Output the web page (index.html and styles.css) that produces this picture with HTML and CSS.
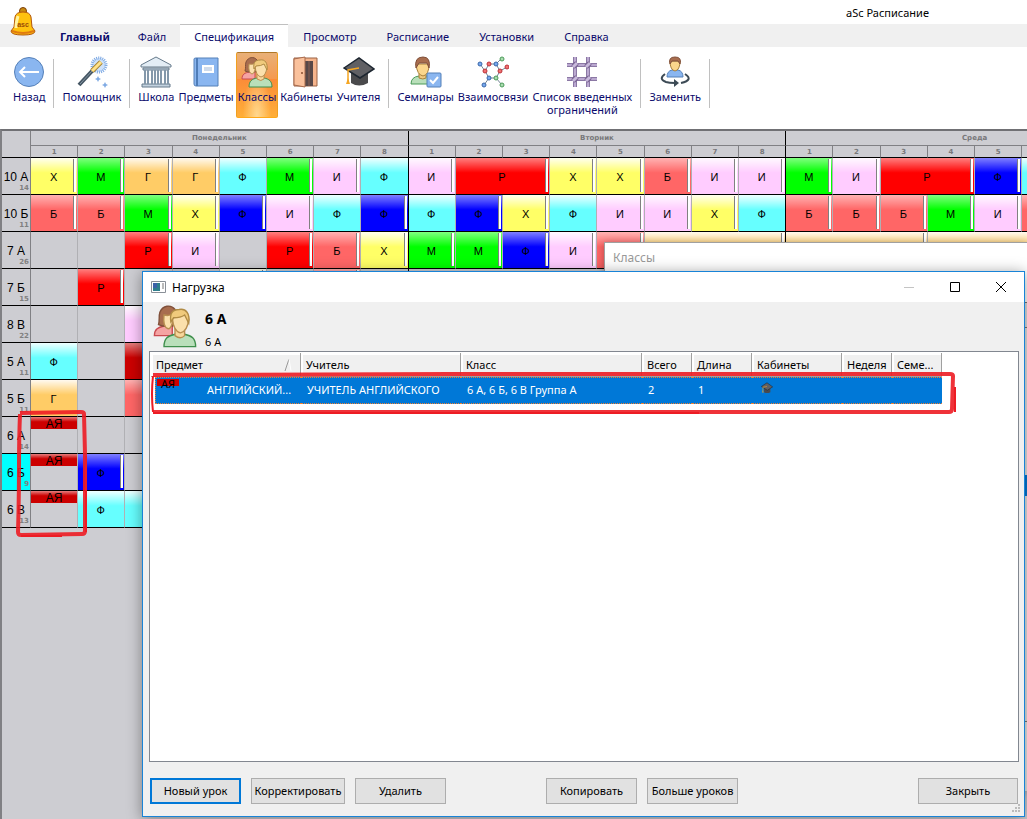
FILE: index.html
```html
<!DOCTYPE html>
<html lang="ru">
<head>
  <meta charset="UTF-8" />
  <meta name="viewport" content="width=device-width, initial-scale=1.0"/>
  <title>aSc Расписание</title>
  <link rel="stylesheet" href="styles.css">
</head>
<body>
  <!-- Shared icons -->
  <svg class="defs" aria-hidden="true">
    <symbol id="people" viewBox="0 0 32 32">
      <path d="M1 23c0-5 3-6 7-7h6v7z" fill="#f5a3a3" stroke="#c94a50"/>
      <path d="M4 15c1-3 0-6 1-9 2-5 8-6 11-2 2 3 1 6 2 10l-4 2H7z" fill="#a86d4e" stroke="#80503a"/>
      <path d="M8 8q4 1 6-1v7q-1 4-3 4-4-1-3-10z" fill="#fbe0ac" stroke="#b88e50"/>
      <path d="M8 31c0-6 3-8 8-9h7c5 1 8 3 8 9z" fill="#b9dfba" stroke="#3f8f4c"/>
      <path d="M16 18v5q4 3 7 0v-5z" fill="#f7d79b" stroke="#b88e50"/>
      <path d="M14 10q6-1 9-3 1 3 3 4-1 9-6 10-5-1-6-11z" fill="#fbe0ac" stroke="#b88e50"/>
      <path d="M13 13c-1-6 1-9 6-9 5-1 8 3 7 10l-3-6q-3 2-8 2z" fill="#f0ca7c" stroke="#b08b45"/>
    </symbol>
    <symbol id="hat" viewBox="0 0 32 32">
      <path d="M8 14v13q8 5 17 0V14z" fill="#4a4a4c"/>
      <path d="M1 12 16 2l15 11-14 9z" fill="#606064" stroke="#1d2630" stroke-width="1.5"/>
      <path d="M16 12 5 14v11" fill="none" stroke="#f5a623" stroke-width="1.5"/>
      <path d="M5 22l-2 6h4z" fill="#f5a623"/>
    </symbol>
  </svg>

  <header class="top">
    <div class="title">
      <svg class="bell" viewBox="0 0 26 30">
        <circle cx="13" cy="4" r="3.500" fill="#c88a10" stroke="#7a3c08"/>
        <path d="M5 10q1-5 8-5t8 5l1 10 3 4q0 4-12 4T1 24l3-4z" fill="#ffc20e" stroke="#b4560a"/>
        <path d="M8 9q-2 6-2 12" fill="none" stroke="#fff3a0" stroke-width="3"/>
        <path d="M2 24q11 4 22 0" fill="none" stroke="#e07a10" stroke-width="2"/>
        <text x="13" y="20" text-anchor="middle" class="bell-text">asc</text>
      </svg>
      <span>aSc Расписание</span>
    </div>
    <nav class="tabs">
      <a href="#" class="tab main-tab">Главный</a>
      <a href="#" class="tab">Файл</a>
      <a href="#" class="tab active">Спецификация</a>
      <a href="#" class="tab">Просмотр</a>
      <a href="#" class="tab">Расписание</a>
      <a href="#" class="tab">Установки</a>
      <a href="#" class="tab">Справка</a>
    </nav>
    <div class="ribbon">
      <button class="tool">
        <svg viewBox="0 0 32 32"><circle cx="16" cy="16" r="14.500" fill="#8ab6f0" stroke="#5580b8"/><path d="M26 16H7M12 11l-5 5 5 5" fill="none" stroke="#fff" stroke-width="2"/></svg>
        Назад
      </button>
      <span class="sep"></span>
      <button class="tool">
        <svg viewBox="0 0 32 32">
          <circle cx="23" cy="9" r="7" fill="#cfe2fa" stroke="#80abe4" stroke-width="3" stroke-dasharray="1 1"/>
          <path d="M3 29 17 14" stroke="#445563" stroke-width="4"/>
          <path d="M4 28 17 14" stroke="#8798a5" stroke-width="1"/>
          <path d="M16 15 25 6" stroke="#a98430" stroke-width="5"/>
          <path d="M16 15 25 6" stroke="#ffe28a" stroke-width="3"/>
          <path d="M22 20l1 2 2 1-2 1-1 2-1-2-2-1 2-1zM29 26l1 2 2 1-2 1-1 2-1-2-2-1 2-1z" fill="#80abe4"/>
        </svg>
        Помощник
      </button>
      <span class="sep"></span>
      <button class="tool">
        <svg viewBox="0 0 32 32">
          <path d="M1 9 16 1l15 8v2H1z" fill="#e3edf5" stroke="#667a8b"/>
          <path d="M3 12h26v2H3zM2 28h28v3H2z" fill="#c3d2df" stroke="#667a8b"/>
          <path d="M5 14v14M8 14v14M12 14v14M15 14v14M18 14v14M21 14v14M25 14v14M28 14v14" stroke="#8498aa" stroke-width="2"/>
        </svg>
        Школа
      </button>
      <button class="tool">
        <svg viewBox="0 0 32 32"><path d="M4 3q0-1 2-1h22v28H6q-2 0-2-2z" fill="#8ab6f0" stroke="#5580b8"/><path d="M7 2v28" stroke="#4f7db8" stroke-width="2"/><path d="M12 9h12v8H12z" fill="#fff"/><path d="M14 12h8M14 14h8" stroke="#a0b8d8"/></svg>
        Предметы
      </button>
      <button class="tool pressed">
        <svg><use href="#people"/></svg>
        Классы
      </button>
      <button class="tool">
        <svg viewBox="0 0 32 32"><path d="M4 2h23v28H4z" fill="#f5b48c" stroke="#9b6244"/><path d="M10 5h13v25H10z" fill="#584848"/><path d="M19 5v25" stroke="#8a5f50"/><path d="M4 3l11-2v30L4 29z" fill="#fac19c" stroke="#a86a4c"/><circle cx="12" cy="17" r="1" fill="#8a4e30"/></svg>
        Кабинеты
      </button>
      <button class="tool">
        <svg><use href="#hat"/></svg>
        Учителя
      </button>
      <span class="sep"></span>
      <button class="tool">
        <svg viewBox="0 0 32 32">
          <path d="M1 28q0-7 8-8h8q6 1 7 8z" fill="#b9dfba" stroke="#4a9a58"/>
          <path d="M9 17v5q4 2 7 0v-5z" fill="#f0ca80" stroke="#a8803c"/>
          <path d="M6 8h13q0 11-6 12-6-1-7-12z" fill="#fbd68c" stroke="#a8803c"/>
          <path d="M6 12q-2-11 7-11 8 0 6 11l-2-5H9z" fill="#a86d4e" stroke="#80503a"/>
          <rect x="17" y="17" width="14" height="14" rx="1" fill="#8ab6f0" stroke="#5580b8"/>
          <path d="M20 24l3 3 5-6" fill="none" stroke="#fff" stroke-width="2"/>
        </svg>
        Семинары
      </button>
      <button class="tool">
        <svg viewBox="0 0 32 32">
          <path d="M3 8 8 15l4 7-5 7M12 8l-4 7M12 8h7l5-5M19 8l4 7 7-4M23 15l-4 7 6 7M12 22h7" fill="none" stroke="#748494"/>
          <g fill="#ee7070" stroke="#bd3038"><circle cx="12" cy="8" r="2"/><circle cx="8" cy="15" r="2"/><circle cx="23" cy="15" r="2"/><circle cx="30" cy="11" r="2"/></g>
          <g fill="#76a8ee" stroke="#3967a8"><circle cx="3" cy="8" r="2"/><circle cx="19" cy="8" r="2"/><circle cx="12" cy="22" r="2"/><circle cx="7" cy="29" r="2"/></g>
          <g fill="#aadcb0" stroke="#4a9a58"><circle cx="25" cy="3" r="2"/><circle cx="19" cy="22" r="2"/><circle cx="25" cy="29" r="2"/></g>
        </svg>
        Взаимосвязи
      </button>
      <button class="tool wide">
        <svg viewBox="0 0 32 32">
          <path d="M9 1v30M22 1v30M1 9h30M1 23h30" stroke="#8b78a4" stroke-width="4"/>
          <path d="M9 1v30M22 1v30M1 9h30M1 23h30" stroke="#baa8d0" stroke-width="2"/>
          <path d="M7 11l4-4M20 11l4-4M7 25l4-4M20 25l4-4" stroke="#776090" stroke-width="5"/>
          <path d="M7 11l4-4M20 11l4-4M7 25l4-4M20 25l4-4" stroke="#c8b9dc" stroke-width="3"/>
        </svg>
        Список введенных ограничений
      </button>
      <span class="sep"></span>
      <button class="tool">
        <svg viewBox="0 0 32 32">
          <path d="M8 21q0-6 5-7h6q5 1 5 7z" fill="#8ab6f0" stroke="#5580b8"/>
          <path d="M11 5h10q0 9-5 10-5-1-5-10z" fill="#fbd68c" stroke="#a8803c"/>
          <path d="M11 8q-2-7 5-7t5 7l-2-3h-6z" fill="#a86d4e" stroke="#80503a"/>
          <path d="M6 18q-7 5 1 8 3 1 9 1M26 18q9 6-4 9" fill="none" stroke="#3c4a55" stroke-width="2"/>
          <path d="M15 23l5 4-5 4z" fill="#3c4a55"/>
        </svg>
        Заменить
      </button>
      <span class="sep"></span>
    </div>
  </header>

  <main class="board">
    <table class="timetable">
      <thead>
        <tr>
          <th rowspan="2" class="corner"></th>
          <th colspan="8" class="day eod">Понедельник</th>
          <th colspan="8" class="day eod">Вторник</th>
          <th colspan="8" class="day eod">Среда</th>
        </tr>
        <tr class="hours">
          <th>1</th><th>2</th><th>3</th><th>4</th><th>5</th><th>6</th><th>7</th><th class="eod">8</th>
          <th>1</th><th>2</th><th>3</th><th>4</th><th>5</th><th>6</th><th>7</th><th class="eod">8</th>
          <th>1</th><th>2</th><th>3</th><th>4</th><th>5</th><th></th><th></th><th class="eod"></th>
        </tr>
      </thead>
      <tbody>
        <tr>
          <th>10 А<small>14</small></th>
          <td class="c yellow">Х</td><td class="c green">М</td><td class="c orange">Г</td><td class="c orange">Г</td><td class="c cyan">Ф</td><td class="c green">М</td><td class="c pink">И</td><td class="c cyan eod">Ф</td>
          <td class="c pink">И</td><td class="c red" colspan="2">Р</td><td class="c yellow">Х</td><td class="c yellow">Х</td><td class="c coral">Б</td><td class="c pink">И</td><td class="c pink eod">И</td>
          <td class="c green">М</td><td class="c pink">И</td><td class="c red" colspan="2">Р</td><td class="c blue">Ф</td><td class="c cyan"></td><td></td><td class="eod"></td>
        </tr>
        <tr>
          <th>10 Б<small>11</small></th>
          <td class="c coral">Б</td><td class="c coral">Б</td><td class="c green">М</td><td class="c yellow">Х</td><td class="c blue">Ф</td><td class="c pink">И</td><td class="c cyan">Ф</td><td class="c blue eod">Ф</td>
          <td class="c cyan">Ф</td><td class="c blue">Ф</td><td class="c yellow">Х</td><td class="c cyan">Ф</td><td class="c pink">И</td><td class="c pink">И</td><td class="c yellow">Х</td><td class="c cyan eod">Ф</td>
          <td class="c coral">Б</td><td class="c coral">Б</td><td class="c coral">Б</td><td class="c green">М</td><td class="c pink">И</td><td class="c coral"></td><td></td><td class="eod"></td>
        </tr>
        <tr>
          <th>7 А<small>26</small></th>
          <td></td><td></td><td class="c red">Р</td><td class="c pink">И</td><td></td><td class="c red">Р</td><td class="c coral">Б</td><td class="c yellow eod">Х</td>
          <td class="c green">М</td><td class="c green">М</td><td class="c blue">Ф</td><td class="c pink">И</td><td class="c coral"></td><td class="c orange eod" colspan="3"></td>
          <td class="c orange" colspan="3"></td><td class="c orange eod" colspan="5"></td>
        </tr>
        <tr>
          <th>7 Б<small>15</small></th>
          <td></td><td class="c red">Р</td><td></td><td></td><td class="c yellow"></td><td></td><td class="c coral"></td><td class="eod"></td>
          <td colspan="16"></td>
        </tr>
        <tr>
          <th>8 В<small>22</small></th>
          <td></td><td></td><td class="c pink"></td><td colspan="21"></td>
        </tr>
        <tr>
          <th>5 А<small>11</small></th>
          <td class="c cyan">Ф</td><td></td><td class="c crimson"></td><td colspan="21"></td>
        </tr>
        <tr>
          <th>5 Б<small>11</small></th>
          <td class="c orange plain">Г</td><td></td><td class="c coral"></td><td colspan="21"></td>
        </tr>
        <tr>
          <th>6 А<small>14</small></th>
          <td class="half"><span class="c crimson">АЯ</span></td><td></td><td></td><td colspan="21"></td>
        </tr>
        <tr>
          <th class="current">6 Б<small>9</small></th>
          <td class="half"><span class="c crimson">АЯ</span></td><td class="c blue">Ф</td><td></td><td colspan="21"></td>
        </tr>
        <tr>
          <th>6 В<small>13</small></th>
          <td class="half"><span class="c crimson">АЯ</span></td><td class="c cyan">Ф</td><td class="c cyan"></td><td colspan="21"></td>
        </tr>
      </tbody>
    </table>
  </main>

  <!-- Classes window behind the dialog -->
  <section class="window classes">
    <h2>Классы</h2>
    <div class="classes-head"></div>
    <div class="classes-list"><div class="selected"></div></div>
    <div class="classes-foot"></div>
  </section>

  <section class="window dialog">
    <div class="titlebar">
      <svg class="app-icon" viewBox="0 0 15 12"><path d="M.5.500h14v11H.500z" fill="#fff" stroke="#8a9098"/><path d="M2 2h7v8H2z" fill="#2f7f8c"/><path d="M2 2h4v5H2z" fill="#3c62a8"/><path d="M11 3h2M11 5h2M11 7h2" stroke="#777"/></svg>
      <h1>Нагрузка</h1>
      <button class="win-btn" aria-label="Свернуть" disabled><svg viewBox="0 0 12 12"><path d="M1 6.500h10" stroke="#c4c4c4"/></svg></button>
      <button class="win-btn" aria-label="Развернуть"><svg viewBox="0 0 12 12"><path d="M1.500 1.500h9v9h-9z" fill="none" stroke="#000"/></svg></button>
      <button class="win-btn" aria-label="Закрыть окно"><svg viewBox="0 0 12 12"><path d="M1 1l10 10M11 1 1 11" stroke="#000"/></svg></button>
    </div>
    <div class="info">
      <svg><use href="#people"/></svg>
      <div>
        <strong>6 А</strong>
        <p>6 А</p>
      </div>
    </div>
    <div class="list">
      <table class="lessons">
        <colgroup>
          <col class="w150"><col class="w160"><col class="w180"><col class="w50"><col class="w60"><col class="w90"><col class="w50"><col class="w50">
        </colgroup>
        <thead>
          <tr>
            <th class="sorted">Предмет<svg viewBox="0 0 8 14"><path d="M1 13 5 1" stroke="#999"/><path d="M5 1l2 12" stroke="#fff"/></svg></th>
            <th>Учитель</th><th>Класс</th><th>Всего</th><th>Длина</th><th>Кабинеты</th><th>Неделя</th><th>Семе...</th>
          </tr>
        </thead>
        <tbody>
          <tr>
            <td class="subject"><div><span class="tag">АЯ</span>АНГЛИЙСКИЙ...</div></td>
            <td>УЧИТЕЛЬ АНГЛИЙСКОГО</td><td>6 А, 6 Б, 6 В Группа А</td><td>2</td><td>1</td>
            <td><svg class="mini"><use href="#hat"/></svg></td><td></td><td></td>
          </tr>
        </tbody>
      </table>
    </div>
    <div class="buttons">
      <button class="btn default">Новый урок</button>
      <button class="btn">Корректировать</button>
      <button class="btn">Удалить</button>
      <button class="btn second">Копировать</button>
      <button class="btn">Больше уроков</button>
      <button class="btn close">Закрыть</button>
    </div>
    <svg class="grip" viewBox="0 0 9 9"><path d="M6 0h2v2H6zM3 3h2v2H3zM6 3h2v2H6zM0 6h2v2H0zM3 6h2v2H3zM6 6h2v2H6z" fill="#bbb"/></svg>
  </section>

  <!-- Red marker outlines -->
  <svg class="mark mark-classes" viewBox="0 0 74 132">
    <path d="M5 6Q4 30 4 60T3 124q0 3 3 3l61-1q3 0 3-3V46L69 6q0-2-3-2L5 5" fill="none" stroke="#ed1c24" stroke-width="4" opacity=".9"/>
    <path d="M6 128h41M71 48v76" stroke="#ed1c24" stroke-width="2"/>
  </svg>
  <svg class="mark mark-row" viewBox="0 0 808 46">
    <path d="M3 6q-2 18 0 36" fill="none" stroke="#ed1c24" stroke-width="2"/>
    <path d="M3 42h796q3 0 3-3l1-33q0-2-3-2L300 4 3 5" fill="none" stroke="#ed1c24" stroke-width="4" opacity=".9"/>
    <path d="M3 43h546M805 17v25" stroke="#ed1c24" stroke-width="2"/>
  </svg>
</body>
</html>
```
FILE: styles.css
```css
* {
  box-sizing: border-box;
}

body {
  margin: 0;
  height: 100vh;
  overflow: hidden;
  position: relative;
  display: flex;
  flex-direction: column;
  font-family: "Noto Sans", sans-serif;
  font-size: 11px;
  background-color: #fff;
  color: #000;
}

button {
  font: inherit;
  color: inherit;
}

.defs {
  position: absolute;
  width: 0;
  height: 0;
}

/* top bar */
.title {
  position: relative;
  height: 24px;
  padding: 5px 98px 0 0;
  text-align: right;
  line-height: 16px;
}

.bell {
  position: absolute;
  left: 10px;
  top: 7px;
  width: 26px;
  height: 30px;
}

.bell-text {
  font: bold 7px "Liberation Sans", sans-serif;
  fill: #9a4a08;
}

.tabs {
  display: flex;
  height: 23px;
  padding-left: 46px;
  background-color: #f0f0f0;
}

.tab {
  padding: 0 14px;
  line-height: 26px;
  color: #0a0a6c;
  text-decoration: none;
}

.main-tab {
  font-weight: bold;
}

.tab.active {
  background-color: #fff;
  border-top: 1px solid #c0c0c0;
  line-height: 24px;
}

.tab.active ~ .tab {
  padding: 0 15px;
}

.ribbon {
  display: flex;
  height: 82px;
  padding: 5px 0 0 11px;
}

.tool {
  display: flex;
  flex-direction: column;
  align-items: center;
  height: 66px;
  padding: 3px 1px 0;
  border: 1px solid transparent;
  background: none;
  line-height: 13px;
  color: #0a0a6c;
}

.tool svg {
  flex: none;
  width: 32px;
  height: 32px;
  margin-bottom: 2px;
}

.tool.wide {
  width: 104px;
}

.tool.pressed {
  border-color: #b07828 #f0a020 #ffa818;
  border-radius: 2px;
  background: radial-gradient(ellipse at 50% 100%, #ffd890, transparent 50%), linear-gradient(#e8b078, #f59a50 40%, #fb8c38 41%, #ffae38);
}

.sep {
  width: 1px;
  height: 49px;
  margin: 7px 6px 0;
  background-color: #c0c0c0;
}

/* timetable */
.board {
  flex: 1;
  overflow: hidden;
  border-top: 2px solid #707074;
  border-left: 2px solid #808084;
  background-color: #cdcdd2;
}

.timetable {
  width: 1162px;
  table-layout: fixed;
  border-spacing: 0;
  font-family: "Liberation Sans", sans-serif;
  font-size: 11px;
}

.timetable th,
.timetable td {
  padding: 0;
  border-right: 1px solid #b0b0b4;
  border-bottom: 1px solid #000;
  text-align: center;
}

.timetable .corner {
  width: 29px;
  border-right-color: #808084;
}

.timetable .day,
.timetable .hours th {
  border-right-color: #808084;
  font: bold 7px "DejaVu Sans", sans-serif;
  color: #77777a;
}

.timetable .day {
  height: 15px;
  border-bottom-color: #808084;
}

.timetable .hours th {
  height: 12px;
  border-bottom-color: #000;
}

.timetable .eod.eod {
  border-right-color: #000;
}

.timetable tbody th {
  height: 37px;
  padding-top: 12px;
  border-right-color: #808084;
  font-size: 12px;
  font-weight: normal;
  line-height: 14px;
  vertical-align: top;
}

.timetable tbody th small {
  display: block;
  padding-right: 1px;
  font: bold 7px/9px "DejaVu Sans", sans-serif;
  color: #808080;
  text-align: right;
}

.timetable .current {
  background-color: #00ffff;
}

.timetable td.c {
  position: relative;
  padding: 1px 1px 0 0;
}

.c {
  background-image: linear-gradient(rgba(255, 255, 255, 0.5), rgba(255, 255, 255, 0) 40%);
  background-origin: border-box;
}

td.c::after {
  content: "";
  position: absolute;
  top: 1px;
  right: 1px;
  bottom: 2px;
  width: 2px;
  border-left: 1px solid #808080;
  background-color: #fff;
}

td.cyan::after,
td.plain::after {
  display: none;
}

.yellow,
.orange,
.pink,
.cyan {
  background-image: linear-gradient(rgba(255, 255, 255, 0.9), rgba(255, 255, 255, 0) 40%);
}

.yellow { background-color: #ffff66; }
.orange { background-color: #ffcc66; }
.pink { background-color: #ffccff; }
.cyan { background-color: #66ffff; }
.green { background-color: #00ff00; }
.red { background-color: #ff0000; }
.coral { background-color: #ff6666; }
.blue { background-color: #0000ff; }
.crimson { background-color: #cc0000; }

.timetable .half {
  vertical-align: top;
}

.half span {
  display: block;
  height: 12px;
  font-size: 12px;
  line-height: 14px;
}

/* windows */
.window {
  position: absolute;
  display: flex;
  flex-direction: column;
}

.classes {
  top: 242px;
  right: 0;
  bottom: 28px;
  left: 604px;
  border-top: 1px solid #a0a0a0;
  border-left: 1px solid #a0a0a0;
  background-color: #fff;
  box-shadow: 0 1px 8px rgba(0, 0, 0, 0.3);
}

.classes h2 {
  margin: 0;
  padding: 6px 8px 0;
  height: 59px;
  font-size: 12px;
  font-weight: normal;
  line-height: 18px;
  color: #999;
}

.classes-head {
  height: 26px;
  border-top: 1px solid #777;
  border-bottom: 1px solid #777;
  background-color: #e0e0e0;
}

.classes-list {
  flex: 1;
  padding-top: 147px;
  background-color: #e4e4e4;
}

.selected {
  height: 21px;
  background-color: #0078d7;
}

.classes-foot {
  height: 70px;
  border-top: 1px solid #777;
  background-color: #e8e8e8;
}

.dialog {
  top: 271px;
  right: 2px;
  bottom: 2px;
  left: 142px;
  border: 1px solid #1883d7;
  background-color: #f0f0f0;
  box-shadow: 0 2px 14px rgba(0, 0, 0, 0.4);
}

.titlebar {
  display: flex;
  align-items: center;
  height: 30px;
  padding-left: 8px;
  background-color: #fff;
}

.app-icon {
  width: 15px;
  height: 12px;
}

.titlebar h1 {
  flex: 1;
  margin: 0 0 0 6px;
  font-size: 12px;
  font-weight: normal;
}

.win-btn {
  width: 46px;
  height: 30px;
  padding: 0;
  border: 0;
  background: none;
}

.win-btn svg {
  display: block;
  width: 12px;
  height: 12px;
  margin: 0 auto;
}

.info {
  display: flex;
  gap: 8px;
  height: 49px;
  padding: 2px 10px 0;
}

.info svg {
  width: 44px;
  height: 44px;
}

.info strong {
  display: block;
  margin-top: 5px;
  font-size: 14px;
  line-height: 20px;
}

.info p {
  margin: 6px 0 0;
  line-height: 14px;
}

.list {
  flex: 1;
  margin: 0 5px 0 6px;
  padding: 1px;
  border: 1px solid #828790;
  background-color: #fff;
}

.lessons {
  table-layout: fixed;
  width: 791px;
  border-spacing: 0;
}

.w50 { width: 50px; }
.w60 { width: 60px; }
.w90 { width: 90px; }
.w150 { width: 150px; }
.w160 { width: 160px; }
.w180 { width: 181px; }

.lessons th {
  height: 24px;
  padding: 0 0 0 5px;
  border: solid #a0a0a0;
  border-width: 0 1px 1px 0;
  box-shadow: inset 2px 2px #fff;
  background-color: #f0f0f0;
  font-weight: normal;
  line-height: 14px;
  text-align: left;
  white-space: nowrap;
}

.sorted svg {
  float: right;
  width: 8px;
  height: 14px;
  margin-right: 8px;
}

.lessons td {
  height: 27px;
  padding: 0 0 2px 6px;
  border: dotted #f08030;
  border-width: 1px 0;
  background-color: #0078d7;
  color: #fff;
  white-space: nowrap;
}

.lessons td.subject {
  padding: 0 0 0 4px;
  border: 0;
  background-color: #fff;
}

.subject div {
  display: flex;
  height: 27px;
  border: 1px dotted #f08030;
  border-right: 0;
  background-color: #0078d7;
  line-height: 23px;
}

.tag {
  width: 22px;
  height: 7px;
  margin: 1px 28px 0 1px;
  background-color: #cc0000;
  color: #000;
  line-height: 9px;
  text-align: center;
}

.mini {
  display: block;
  width: 12px;
  height: 12px;
  margin: 0 0 3px 3px;
}

.buttons {
  display: flex;
  gap: 10px;
  padding: 16px 6px 12px 7px;
}

.btn {
  width: 91px;
  height: 26px;
  padding: 0 0 2px;
  border: 1px solid #adadad;
  background-color: #e1e1e1;
  white-space: nowrap;
}

.btn:nth-child(2) {
  width: 94px;
}

.btn.default {
  border: 2px solid #0078d7;
}

.btn.second {
  margin-left: 90px;
}

.btn.close {
  width: 100px;
  margin-left: auto;
}

.grip {
  position: absolute;
  right: 3px;
  bottom: 3px;
  width: 9px;
  height: 9px;
}

/* marker outlines */
.mark {
  position: absolute;
  pointer-events: none;
}

.mark-classes {
  left: 15px;
  top: 408px;
  width: 74px;
  height: 132px;
}

.mark-row {
  left: 150px;
  top: 370px;
  width: 808px;
  height: 46px;
}
```
